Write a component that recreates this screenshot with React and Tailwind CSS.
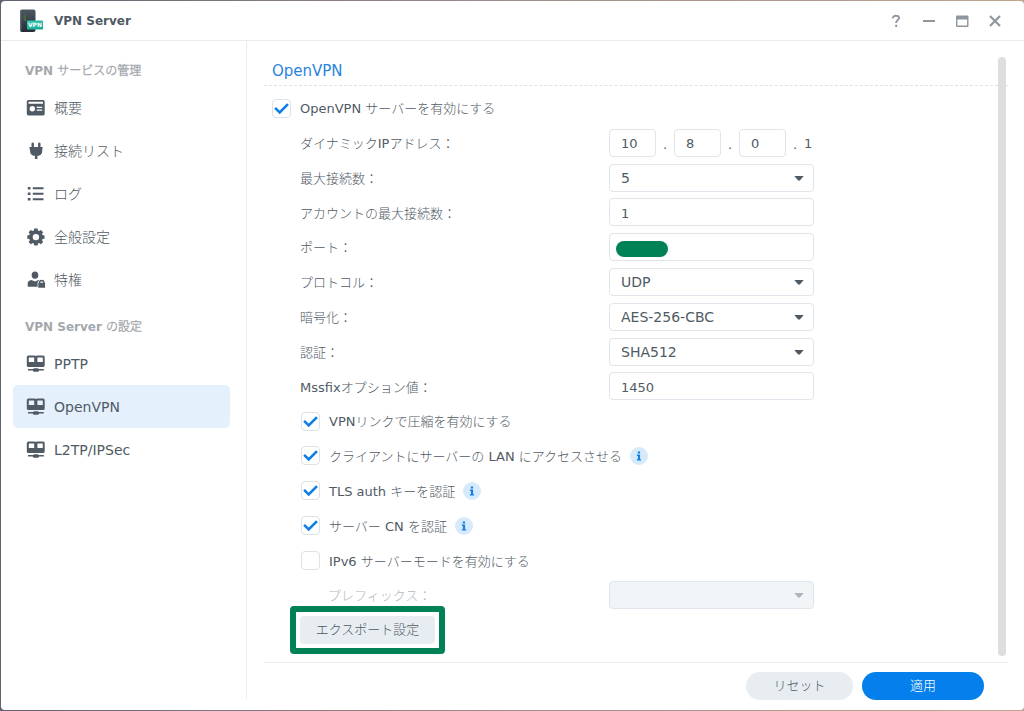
import { useState } from "react";

// Sidebar icons
const OverviewIcon = () => (
  <svg width="20" height="18" viewBox="0 0 20 18" fill="currentColor" aria-hidden="true">
    <path
      fillRule="evenodd"
      d="M2.400 1h14.700A1.600 1.600 0 0 1 18.700 2.600v12.200A1.600 1.600 0 0 1 17.100 16.400H2.400A1.600 1.600 0 0 1 .8 14.800V2.600A1.600 1.600 0 0 1 2.400 1ZM2.500 2.700v2.100h14.500V2.700ZM6.300 7.100a2.700 2.700 0 1 0 0 5.400 2.700 2.700 0 0 0 0-5.400ZM10.700 7.800v1.300h5.500V7.800ZM10.700 10.500v1.300h5.500v-1.300Z"
    />
  </svg>
);

const PlugIcon = () => (
  <svg width="20" height="18" viewBox="0 0 20 18" fill="currentColor" aria-hidden="true">
    <path d="M5.500 1.800a1.200 1.200 0 0 1 2.400 0V5h4.200V1.800a1.200 1.200 0 0 1 2.400 0V5H16.500v2.600h-.3v2c0 2.200-1.500 3.900-3.700 4.100h-1.100V17H8.900v-3.300H7.800C5.600 13.500 4.100 11.800 4.100 9.600v-2h-.6V5h2Z" />
  </svg>
);

const ListIcon = () => (
  <svg width="20" height="18" viewBox="0 0 20 18" fill="currentColor" aria-hidden="true">
    <path d="M1.800 2h2.700v2.400H1.800ZM6.800 2.200h10.700v2H6.800ZM1.800 7.500h2.700v2.400H1.800ZM6.800 7.700h10.700v2H6.800ZM1.800 13h2.700v2.400H1.800ZM6.800 13.200h10.700v2H6.800Z" />
  </svg>
);

const GearIcon = () => (
  <svg width="20" height="18" viewBox="0 0 20 18" fill="currentColor" aria-hidden="true">
    <path
      fillRule="evenodd"
      d="M8.200.6h3.400l.4 2 1.100.5 1.800-1.200 2.300 2.300-1.200 1.800.5 1.100 2 .4v3.200l-2 .4-.5 1.100 1.200 1.800-2.300 2.300-1.800-1.200-1.100.5-.4 2H8.200l-.4-2-1.100-.5-1.800 1.200-2.300-2.300 1.200-1.800-.5-1.100-2-.4V7.500l2-.4.5-1.100-1.200-1.800 2.300-2.300 1.800 1.200 1.100-.5ZM9.900 5.900a3.200 3.200 0 1 0 0 6.400 3.200 3.200 0 0 0 0-6.400Z"
    />
  </svg>
);

const PrivilegeIcon = () => (
  <svg width="20" height="18" viewBox="0 0 20 18" fill="currentColor" aria-hidden="true">
    <ellipse cx="9" cy="4.200" rx="3.300" ry="3.600" />
    <path d="M5.500 9 9 10.400 12.400 9l.9.300a4.200 4.200 0 0 0-1.700 2.400v4.100H1.700v-3.500C1.700 10.400 3.300 9.500 5.500 9Z" />
    <path
      fillRule="evenodd"
      d="M12.800 11.700a2.900 2.900 0 0 1 5.800 0h.5v5h-6.800v-5ZM14.200 11.700h3a1.500 1.500 0 0 0-3 0Z"
    />
  </svg>
);

const NetworkIcon = () => (
  <svg width="20" height="18" viewBox="0 0 20 18" fill="currentColor" aria-hidden="true">
    <path
      fillRule="evenodd"
      d="M2.400.4h6.200l1.200.7 1.200-.7h6.100a1.600 1.600 0 0 1 1.600 1.600v8.500a1.600 1.600 0 0 1-1.600 1.600H2.400A1.600 1.600 0 0 1 .8 10.500V2A1.600 1.600 0 0 1 2.400.4ZM2.800 2.400v4.700h5.400V2.400ZM11.400 2.400v4.700h5.400V2.400Z"
    />
    <path d="M8 13.200h3.800l1 .9h5v1.300h-4.600l-1 1.300H7.600l-1-1.300H2v-1.300h5Z" />
  </svg>
);

const Logo = () => (
  <svg width="24" height="24" viewBox="0 0 24 24" aria-hidden="true">
    <defs>
      <linearGradient id="tower" x1="0" y1="0" x2="0" y2="1">
        <stop offset="0" stopColor="#4b5762" />
        <stop offset="1" stopColor="#262d35" />
      </linearGradient>
      <linearGradient id="tag" x1="0" y1="0" x2="1" y2="1">
        <stop offset="0" stopColor="#35cbb5" />
        <stop offset="1" stopColor="#12a490" />
      </linearGradient>
    </defs>
    <rect x="1" y="0.500" width="15.500" height="22.500" rx="2" fill="url(#tower)" />
    <rect x="1" y="2" width="1.500" height="19.500" rx="0.700" fill="#5b6772" />
    <rect x="4.500" y="6" width="2.500" height="6" rx="0.500" fill="#49663f" />
    <rect x="8" y="11.500" width="16" height="9" rx="1" fill="url(#tag)" />
    <text
      x="16"
      y="18.300"
      textAnchor="middle"
      fontSize="6"
      fontWeight="700"
      fill="#fff"
      fontFamily="DejaVu Sans, sans-serif"
    >
      VPN
    </text>
  </svg>
);

const menu = [
  {
    title: "VPN サービスの管理",
    items: [
      { label: "概要", Icon: OverviewIcon },
      { label: "接続リスト", Icon: PlugIcon },
      { label: "ログ", Icon: ListIcon },
      { label: "全般設定", Icon: GearIcon },
      { label: "特権", Icon: PrivilegeIcon },
    ],
  },
  {
    title: "VPN Server の設定",
    items: [
      { label: "PPTP", Icon: NetworkIcon },
      { label: "OpenVPN", Icon: NetworkIcon },
      { label: "L2TP/IPSec", Icon: NetworkIcon },
    ],
  },
];

const fieldClass =
  "h-7 rounded-[4px] border border-[#dfe5ea] bg-white px-[11px] pt-[2px] text-[#505a64] outline-none focus:border-[#057feb]";

// Label on the left, control on the right
const Row = ({ label, htmlFor, disabled, indent, children }) => (
  <div className="flex h-7 items-center">
    <label
      htmlFor={htmlFor}
      className={`w-[337px] shrink-0 pt-[2px] ${indent ? "pl-14" : "pl-7"} ${disabled ? "text-[#b4b9be]" : ""}`}
    >
      {label}
    </label>
    {children}
  </div>
);

const Select = ({ id, options, disabled }) => (
  <div className="relative w-[205px]">
    <select
      id={id}
      disabled={disabled}
      className={`${fieldClass} block w-full appearance-none text-[14px] disabled:bg-[#f2f5f8]`}
    >
      {options.map((option) => (
        <option key={option}>{option}</option>
      ))}
    </select>
    <svg
      width="10"
      height="5"
      viewBox="0 0 10 5"
      aria-hidden="true"
      className={`pointer-events-none absolute top-3 right-[10px] ${disabled ? "text-[#b0b5ba]" : "text-[#505a64]"}`}
    >
      <path d="M1 0h8q.8 0 .3.600L6 4.300q-1 .8-2 0L.7.600Q.2 0 1 0Z" fill="currentColor" />
    </svg>
  </div>
);

const Checkbox = ({ label, checked: initial, indent, info }) => {
  const [checked, setChecked] = useState(Boolean(initial));
  return (
    <div className={`flex h-7 items-center ${indent ? "pl-[29px]" : ""}`}>
      <label className="flex items-center gap-[9px]">
        <span className="relative block size-[19px]">
          <input
            type="checkbox"
            checked={checked}
            onChange={(e) => setChecked(e.target.checked)}
            className="block size-[19px] appearance-none rounded-[4px] border border-[#dce2e8] bg-white"
          />
          {checked && (
            <svg
              width="19"
              height="19"
              viewBox="0 0 19 19"
              aria-hidden="true"
              className="pointer-events-none absolute inset-0"
            >
              <path d="M3.100 8.900 7.700 13.400 16 5.100" fill="none" stroke="#0d7fe4" strokeWidth="2.600" />
            </svg>
          )}
        </span>
        <span className="pt-[2px]">{label}</span>
      </label>
      {info && (
        <button type="button" aria-label="詳細" className="ml-2 pt-[1px]">
          <svg width="18" height="18" viewBox="0 0 18 18" aria-hidden="true" className="block">
            <circle cx="9" cy="9" r="9" fill="#d6eafc" />
            <path d="M7.800 4.500h2.300v2H7.800ZM6.900 7.600h3.200v4.600h1v1.300H6.900v-1.300h1V8.900h-1Z" fill="#1580df" />
          </svg>
        </button>
      )}
    </div>
  );
};

const App = () => {
  const [active, setActive] = useState("OpenVPN");

  return (
    <div className="h-screen bg-linear-to-r from-[#5f6470] via-[#a28d8c] to-[#bda58e] py-px pl-px font-['DejaVu_Sans','Noto_Sans_CJK_JP_Light','Noto_Sans_CJK_JP',sans-serif] text-[13px] text-[#505a64]">
      <div className="flex h-full flex-col rounded-[4px] bg-white">
        {/* Title bar */}
        <header className="flex h-10 shrink-0 items-center border-b border-[#e9ebed] pt-[1px] pr-[21px] pl-[18px]">
          <Logo />
          <h1 className="ml-[11px] text-[12px] font-bold">VPN Server</h1>
          <div className="ml-auto flex items-center gap-[17px] text-[#8f969d]">
            <button type="button" aria-label="ヘルプ">
              <svg width="16" height="16" viewBox="0 0 16 16" aria-hidden="true" className="block">
                <path
                  d="M4.900 5.200V4.600A2.900 2.500 0 0 1 8 2.700c1.900 0 3 .9 3 2.400 0 2-2.800 2.100-2.800 4.500v.4M8.200 11.800v2.200"
                  fill="none"
                  stroke="currentColor"
                  strokeWidth="1.900"
                />
              </svg>
            </button>
            <button type="button" aria-label="最小化">
              <svg width="16" height="16" viewBox="0 0 16 16" aria-hidden="true" className="block">
                <path d="M2 8h12" stroke="currentColor" strokeWidth="2" />
              </svg>
            </button>
            <button type="button" aria-label="最大化">
              <svg width="16" height="16" viewBox="0 0 16 16" aria-hidden="true" className="block">
                <path
                  fillRule="evenodd"
                  d="M3 2.500h10.500a1 1 0 0 1 1 1v9.500a1 1 0 0 1-1 1H3a1 1 0 0 1-1-1V3.500a1 1 0 0 1 1-1ZM3.400 6.500v6.100h9.700V6.500Z"
                  fill="currentColor"
                />
              </svg>
            </button>
            <button type="button" aria-label="閉じる">
              <svg width="16" height="16" viewBox="0 0 16 16" aria-hidden="true" className="block">
                <path d="m3 3 10 10M13 3 3 13" stroke="currentColor" strokeWidth="2.200" />
              </svg>
            </button>
          </div>
        </header>

        <div className="flex min-h-0 flex-1">
          {/* Sidebar */}
          <nav className="mb-[11px] w-[246px] shrink-0 border-r border-[#e9ebed] pt-[13px] pr-4 pl-3">
            {menu.map((group) => (
              <section key={group.title} className="mb-[9px]">
                <h2 className="flex h-8 items-center pt-[2px] pl-3 text-[12px] font-bold text-[#a3a8ad]">
                  {group.title}
                </h2>
                {group.items.map(({ label, Icon }) => (
                  <button
                    key={label}
                    type="button"
                    onClick={() => setActive(label)}
                    className={`flex h-[43px] w-full items-center gap-2 rounded-[5px] pl-[13px] text-[14px] ${
                      active === label ? "bg-[#e4f1fd]" : ""
                    }`}
                  >
                    <Icon />
                    <span className="pt-[1px]">{label}</span>
                  </button>
                ))}
              </section>
            ))}
          </nav>

          {/* Settings */}
          <main className="flex min-w-0 flex-1 flex-col pr-4 pl-[17px]">
            <div className="flex min-h-0 flex-1">
              <div className="flex min-w-0 flex-1 flex-col pb-[18px]">
                <h2 className="flex h-[45px] shrink-0 items-center border-b border-dashed border-[#dfe3e6] pt-4 pl-2 text-[15px] text-[#2a84dc]">
                  OpenVPN
                </h2>
                <form id="openvpn" className="flex flex-1 flex-col justify-between pt-2 pl-2">
                  <Checkbox label="OpenVPN サーバーを有効にする" checked />
                  <Row label="ダイナミックIPアドレス：" htmlFor="ip-1">
                    <div className="flex items-center">
                      <input id="ip-1" defaultValue="10" className={`${fieldClass} w-[47px]`} />
                      <span className="w-[18px] pt-1 text-center">.</span>
                      <input aria-label="IP 2" defaultValue="8" className={`${fieldClass} w-[47px]`} />
                      <span className="w-[18px] pt-1 text-center">.</span>
                      <input aria-label="IP 3" defaultValue="0" className={`${fieldClass} w-[47px]`} />
                      <span className="w-[18px] pt-1 text-center">.</span>
                      <span className="pt-[2px]">1</span>
                    </div>
                  </Row>
                  <Row label="最大接続数：" htmlFor="max">
                    <Select id="max" options={["5"]} />
                  </Row>
                  <Row label="アカウントの最大接続数：" htmlFor="account-max">
                    <input id="account-max" defaultValue="1" className={`${fieldClass} w-[205px]`} />
                  </Row>
                  <Row label="ポート：" htmlFor="port">
                    <div className="relative">
                      <input id="port" className={`${fieldClass} block w-[205px]`} />
                      <span className="absolute top-2 left-[7px] h-4 w-[52px] rounded-full bg-[#008156]" />
                    </div>
                  </Row>
                  <Row label="プロトコル：" htmlFor="protocol">
                    <Select id="protocol" options={["UDP", "TCP"]} />
                  </Row>
                  <Row label="暗号化：" htmlFor="cipher">
                    <Select id="cipher" options={["AES-256-CBC"]} />
                  </Row>
                  <Row label="認証：" htmlFor="auth">
                    <Select id="auth" options={["SHA512"]} />
                  </Row>
                  <Row label="Mssfixオプション値：" htmlFor="mssfix">
                    <input id="mssfix" defaultValue="1450" className={`${fieldClass} w-[205px]`} />
                  </Row>
                  <Checkbox label="VPNリンクで圧縮を有効にする" checked indent />
                  <Checkbox label="クライアントにサーバーの LAN にアクセスさせる" checked indent info />
                  <Checkbox label="TLS auth キーを認証" checked indent info />
                  <Checkbox label="サーバー CN を認証" checked indent info />
                  <Checkbox label="IPv6 サーバーモードを有効にする" indent />
                  <Row label="プレフィックス：" htmlFor="prefix" disabled indent>
                    <Select id="prefix" options={[""]} disabled />
                  </Row>
                  <div className="flex pl-7">
                    <div className="relative">
                      <button type="button" className="block h-7 w-[135px] rounded-[4px] bg-[#e8edf2]">
                        エクスポート設定
                      </button>
                      {/* Highlight frame around the export button */}
                      <div className="pointer-events-none absolute -inset-[10px] rounded-[4px] border-[6px] border-[#008156]" />
                    </div>
                  </div>
                </form>
              </div>
              {/* Scrollbar */}
              <div className="mt-4 mr-[2px] mb-[6px] -ml-[10px] w-2 rounded-full bg-[#dedede]" />
            </div>

            <footer className="flex h-12 shrink-0 items-start justify-end gap-[9px] border-t border-[#e9ebed] pt-[9px] pr-6">
              <button type="reset" form="openvpn" className="h-7 w-[107px] rounded-full bg-[#e8edf2]">
                リセット
              </button>
              <button type="button" className="h-7 w-[122px] rounded-full bg-[#057feb] text-white">
                適用
              </button>
            </footer>
          </main>
        </div>
      </div>
    </div>
  );
};

export default App;
